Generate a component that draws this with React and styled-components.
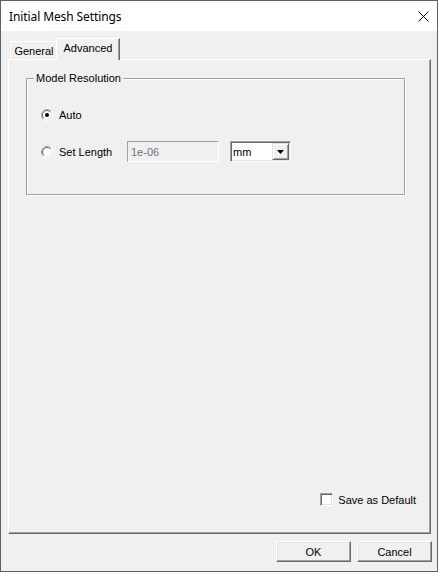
import React from 'react';
import styled, { createGlobalStyle } from 'styled-components';

const GlobalStyle = createGlobalStyle`
  html, body {
    margin: 0;
    padding: 0;
    background: #f0f0f0;
  }
  * {
    box-sizing: border-box;
  }
`;

const Window = styled.div`
  width: 438px;
  height: 572px;
  border: 1px solid #5f5f6a;
  display: flex;
  flex-direction: column;
  background: #f0f0f0;
  font-family: 'Liberation Sans', Arial, sans-serif;
  font-size: 11px;
  color: #000;
`;

const TitleBar = styled.div`
  height: 30px;
  flex: none;
  background: #fff;
  display: flex;
  align-items: center;
  padding-left: 8px;
`;

const Title = styled.div`
  flex: 1;
  font-family: 'Noto Sans', 'Open Sans', sans-serif;
  font-size: 12px;
  letter-spacing: -0.1px;
  color: #000;
`;

const CloseButton = styled.div`
  width: 28px;
  height: 30px;
  display: flex;
  align-items: center;
  justify-content: center;
`;

const Body = styled.div`
  flex: 1;
  display: flex;
  flex-direction: column;
  padding: 7px 5px 9px 7px;
`;

const TabStrip = styled.div`
  height: 21px;
  display: flex;
  align-items: flex-end;
  padding-left: 2px;
  position: relative;
  z-index: 1;
`;

const Tab = styled.div`
  height: ${(p) => (p.$active ? 22 : 18)}px;
  width: ${(p) => p.$width}px;
  margin-left: ${(p) => (p.$active ? -2 : 0)}px;
  margin-bottom: ${(p) => (p.$active ? -1 : 0)}px;
  display: flex;
  align-items: center;
  justify-content: center;
  padding-bottom: ${(p) => (p.$active ? 3 : 0)}px;
  background: #f0f0f0;
  border-top: 1px solid #fff;
  border-left: 1px solid #fff;
  border-right: 1px solid #696969;
  box-shadow: inset -1px 0 0 #a0a0a0;
`;

const Panel = styled.div`
  height: 475px;
  display: flex;
  flex-direction: column;
  border-top: 1px solid #fff;
  border-left: 1px solid #fff;
  border-right: 1px solid #696969;
  border-bottom: 1px solid #696969;
  box-shadow: inset -1px -1px 0 #a0a0a0;
  padding: 18px 14px 27px 17px;
  margin-right: 1px;
`;

const GroupBox = styled.div`
  position: relative;
  width: 379px;
  height: 117px;
  border: 1px solid #a0a0a0;
  box-shadow: 1px 1px 0 #fff, inset 1px 1px 0 #fff;
  padding: 25px 0 0 14px;
  display: flex;
  flex-direction: column;
  gap: 16px;
`;

const Legend = styled.span`
  position: absolute;
  top: -7px;
  left: 7px;
  padding: 0 2px;
  background: #f0f0f0;
  line-height: 13px;
`;

const Row = styled.div`
  height: 21px;
  display: flex;
  align-items: center;
`;

const Option = styled.label`
  width: ${(p) => p.$width || 'auto'}px;
  display: flex;
  align-items: center;
  gap: 6px;
`;

const TextBox = styled.div`
  width: 92px;
  height: 21px;
  display: flex;
  align-items: center;
  padding-left: 3px;
  background: #f0f0f0;
  border-top: 1px solid #a0a0a0;
  border-left: 1px solid #a0a0a0;
  border-right: 1px solid #fff;
  border-bottom: 1px solid #fff;
  color: #6c7083;
`;

const Select = styled.div`
  width: 61px;
  height: 21px;
  margin-left: 11px;
  display: flex;
  align-items: stretch;
  background: #fff;
  border-top: 1px solid #a0a0a0;
  border-left: 1px solid #a0a0a0;
  border-right: 1px solid #fff;
  border-bottom: 1px solid #fff;
  box-shadow: inset 1px 1px 0 #696969, inset -1px -1px 0 #e3e3e3;
  padding: 1px;
`;

const SelectValue = styled.div`
  flex: 1;
  display: flex;
  align-items: center;
  padding-left: 1px;
  color: #000;
`;

const ArrowButton = styled.div`
  width: 17px;
  display: flex;
  align-items: center;
  justify-content: center;
  background: #f0f0f0;
  border-top: 1px solid #e3e3e3;
  border-left: 1px solid #e3e3e3;
  border-right: 1px solid #696969;
  border-bottom: 1px solid #696969;
  box-shadow: inset 1px 1px 0 #fff, inset -1px -1px 0 #a0a0a0;
`;

const Spacer = styled.div`
  flex: 1;
`;

const CheckRow = styled.label`
  align-self: flex-end;
  display: flex;
  align-items: center;
  gap: 5px;
`;

const CheckBox = styled.span`
  width: 13px;
  height: 13px;
  background: #fff;
  border-top: 1px solid #a0a0a0;
  border-left: 1px solid #a0a0a0;
  border-right: 1px solid #fff;
  border-bottom: 1px solid #fff;
  box-shadow: inset 1px 1px 0 #696969, inset -1px -1px 0 #e3e3e3;
`;

const ButtonRow = styled.div`
  margin-top: 7px;
  display: flex;
  justify-content: flex-end;
  gap: 6px;
`;

const Button = styled.button`
  width: 75px;
  height: 21px;
  padding: 0;
  font-family: 'Liberation Sans', Arial, sans-serif;
  font-size: 11px;
  color: #000;
  background: #f0f0f0;
  border-top: 1px solid #fff;
  border-left: 1px solid #fff;
  border-right: 1px solid #696969;
  border-bottom: 1px solid #696969;
  box-shadow: inset -1px -1px 0 #a0a0a0, inset 1px 1px 0 #e3e3e3;
`;

const Radio = ({ checked }) => (
  <svg width="12" height="12" viewBox="0 0 12 12">
    <defs>
      <linearGradient id="rOuter" x1="0" y1="0" x2="1" y2="1">
        <stop offset="0.45" stopColor="#a0a0a0" />
        <stop offset="0.55" stopColor="#ffffff" />
      </linearGradient>
      <linearGradient id="rInner" x1="0" y1="0" x2="1" y2="1">
        <stop offset="0.45" stopColor="#696969" />
        <stop offset="0.55" stopColor="#e3e3e3" />
      </linearGradient>
    </defs>
    <circle cx="6" cy="6" r="5.5" fill="none" stroke="url(#rOuter)" strokeWidth="1" />
    <circle cx="6" cy="6" r="4.5" fill="#fff" stroke="url(#rInner)" strokeWidth="1" />
    {checked && <circle cx="6" cy="6" r="2" fill="#000" />}
  </svg>
);

const App = () => (
  <>
    <GlobalStyle />
    <Window>
      <TitleBar>
        <Title>Initial Mesh Settings</Title>
        <CloseButton>
          <svg width="11" height="11" viewBox="0 0 11 11">
            <path d="M0.5 0.5 L10.5 10.5 M10.5 0.5 L0.5 10.5" stroke="#000" strokeWidth="1" />
          </svg>
        </CloseButton>
      </TitleBar>
      <Body>
        <TabStrip>
          <Tab $width={48}>General</Tab>
          <Tab $active $width={64}>Advanced</Tab>
        </TabStrip>
        <Panel>
          <GroupBox>
            <Legend>Model Resolution</Legend>
            <Row>
              <Option>
                <Radio checked />
                Auto
              </Option>
            </Row>
            <Row>
              <Option $width={86}>
                <Radio />
                Set Length
              </Option>
              <TextBox>1e-06</TextBox>
              <Select>
                <SelectValue>mm</SelectValue>
                <ArrowButton>
                  <svg width="7" height="4" viewBox="0 0 7 4">
                    <path d="M0 0 H7 L3.5 4 Z" fill="#000" />
                  </svg>
                </ArrowButton>
              </Select>
            </Row>
          </GroupBox>
          <Spacer />
          <CheckRow>
            <CheckBox />
            Save as Default
          </CheckRow>
        </Panel>
        <ButtonRow>
          <Button>OK</Button>
          <Button>Cancel</Button>
        </ButtonRow>
      </Body>
    </Window>
  </>
);

export default App;
